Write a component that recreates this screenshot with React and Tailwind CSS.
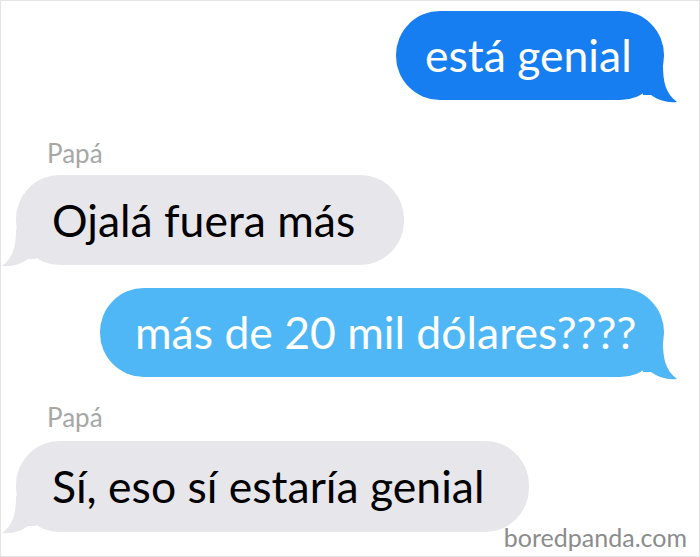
import React from 'react';

const BLUE = '#177ef1';
const LIGHT = '#4fb7f6';
const GRAY = '#e6e6eb';

const Tail = ({ side, color }) => {
  const right = side === 'right';
  return (
    <svg
      className={right ? 'absolute right-[-13px] bottom-[-3px]' : 'absolute left-[-14px] bottom-[-2px]'}
      width="34"
      height="38"
      viewBox="0 0 34 38"
      style={right ? undefined : { transform: 'scaleX(-1)' }}
    >
      <path d="M0 0 L20 0 C20 16 22 28 34 37 C24 38 15 35 8 30 L0 30 Z" fill={color} />
    </svg>
  );
};

const Bubble = ({ side, color, textColor, className, children }) => (
  <div className={`relative flex items-center rounded-[44px] ${className}`} style={{ backgroundColor: color }}>
    <Tail side={side} color={color} />
    <span className={`relative whitespace-nowrap text-[44.5px] leading-none ${textColor}`}>{children}</span>
  </div>
);

const App = () => {
  return (
    <div className="relative w-[700px] h-[557px] overflow-hidden bg-white border border-[#e4e4e4] flex flex-col font-['Lato',_'Open_Sans',_sans-serif]">
      <Bubble side="right" color={BLUE} textColor="text-white" className="self-end mr-[35px] mt-[10px] h-[89px] w-[268px] pl-[29px]">
        está genial
      </Bubble>

      <div className="ml-[46px] mt-[40px] text-[26px] leading-[27px] text-[#a7a7a7]">Papá</div>

      <Bubble side="left" color={GRAY} textColor="text-black" className="self-start ml-[15px] mt-[8px] h-[90px] w-[388px] pl-[36px]">
        Ojalá fuera más
      </Bubble>

      <Bubble side="right" color={LIGHT} textColor="text-white" className="self-end mr-[35px] mt-[23px] h-[89px] w-[564px] pl-[35px]">
        más de 20 mil dólares????
      </Bubble>

      <div className="ml-[46px] mt-[27px] text-[26px] leading-[27px] text-[#a7a7a7]">Papá</div>

      <Bubble side="left" color={GRAY} textColor="text-black" className="self-start ml-[15px] mt-[10px] h-[91px] w-[513px] pl-[36px]">
        Sí, eso sí estaría genial
      </Bubble>

      <div className="absolute right-[12px] bottom-[4px] text-[25px] leading-[30px] text-[#8c8c8c]">boredpanda.com</div>
    </div>
  );
};

export default App;
